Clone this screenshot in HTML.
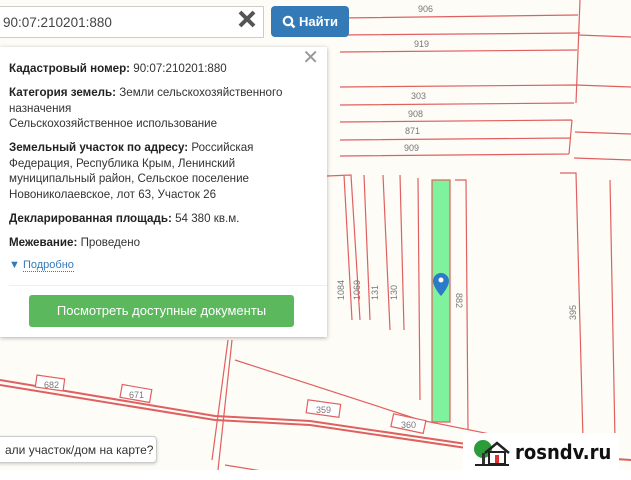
<!DOCTYPE html>
<html><head><meta charset="utf-8"><style>
*{margin:0;padding:0;box-sizing:border-box}
body{width:631px;height:480px;overflow:hidden;position:relative;background:#fdfcf7;font-family:"Liberation Sans",sans-serif}
svg.map{position:absolute;left:0;top:0}
.inp{position:absolute;left:0;top:6px;width:264px;height:32px;background:#fff;border:1px solid #ccc;border-left:none;font-size:13.5px;color:#444;padding:8px 3px}
.x{position:absolute;left:237px;top:9px}
.btn{position:absolute;left:271px;top:6px;width:78px;height:31px;background:#337ab7;border-radius:4px;color:#fff;font-size:13px;font-weight:bold;padding:8px 0 0 28px}
.btn svg{position:absolute;left:11px;top:9px}
.pop{position:absolute;left:0;top:47px;width:327px;height:290px;background:#fff;box-shadow:0 1px 4px rgba(0,0,0,.3);font-size:11.6px;color:#333;padding:14px 30px 14px 9px;line-height:15.5px}
.pop b{font-weight:bold;color:#222}
.pop p{margin-bottom:8.7px}
.cl{position:absolute;right:8px;top:4px;font-size:20px;color:#999}
.more{color:#337ab7;font-size:11px;margin-top:-1px}
.more span{border-bottom:1px dotted #337ab7}
.gbtn{position:absolute;left:29px;top:248px;width:265px;height:32px;background:#5cb85c;border-radius:3px;color:#fff;font-size:13px;text-align:center;line-height:32px}
.hr{position:absolute;left:9px;right:0;top:238px;border-top:1px solid #eee}
.q{position:absolute;left:-4px;top:436px;width:161px;height:27px;background:#fff;border:1px solid #ccc;border-radius:4px;font-size:12px;color:#333;padding:6px 8px;white-space:nowrap;box-shadow:0 1px 3px rgba(0,0,0,.2)}
.logo{position:absolute;left:463px;top:433px;width:156px;height:38px;background:#fff}
.logo .t{position:absolute;left:52px;top:7px;font-size:20px;font-weight:bold;color:#111;font-family:"DejaVu Sans Condensed","DejaVu Sans",sans-serif}
.bot{position:absolute;left:0;top:470px;width:631px;height:10px;background:#fff}
</style></head><body>
<svg class="map" width="631" height="480" fill="none" stroke="#e06060" stroke-width="1.2">
<g font-size="9" fill="#777" stroke="none" font-family="Liberation Sans">
<text x="418" y="12">906</text><text x="414" y="47">919</text><text x="411" y="99">303</text><text x="408" y="117">908</text><text x="405" y="134">871</text><text x="404" y="151">909</text>
</g>
<path d="M340 18L578 15M340 35L580 33M340 52L577 50M340 87L576 85M340 105L574 103M340 122L572 120M340 140L570 138M340 156L569 154M580 0L576 103M572 120L569 154M578 35L631 37M576 85L631 87M575 132L631 134M574 158L631 160"/>
<path d="M327 176L351 175L360 320M344 175L352 320M364 175L370 320M383 175L390 330M400 175L404 330M418 178L420 400M455 180L466 180L468 430M560 173L576 173L583 440M610 180L615 440"/>
<rect x="432" y="180" width="18" height="242" fill="#7ef29c" stroke="#e06060"/>
<g font-size="9" fill="#777" stroke="none"><text transform="translate(344 300) rotate(-90)">1084</text><text transform="translate(360 300) rotate(-90)">1069</text><text transform="translate(378 300) rotate(-90)">131</text><text transform="translate(397 300) rotate(-90)">130</text><text transform="translate(456 293) rotate(90)">882</text><text transform="translate(576 320) rotate(-90)">395</text></g>
<path d="M0 385L215 420L310 425L480 450L631 460M0 380L215 416L310 421L480 446" stroke-width="2"/>
<path d="M228 340L212 460M232 340L218 470M235 360L420 420L520 440M225 465L380 490" />
<g fill="#fff"><rect x="36" y="377" width="28" height="12" transform="rotate(8 50 383)"/><rect x="121" y="387" width="30" height="13" transform="rotate(10 136 393)"/><rect x="307" y="402" width="33" height="13" transform="rotate(8 323 408)"/><rect x="392" y="417" width="33" height="13" transform="rotate(12 408 423)"/></g>
<g font-size="9" fill="#777" stroke="none"><text x="44" y="388">682</text><text x="129" y="398">671</text><text x="316" y="413">359</text><text x="401" y="428">360</text></g>
<path d="M433 281a8 8 0 1 1 16 0c0 6-8 15-8 15s-8-9-8-15z" fill="#2b7bc6" stroke="none"/><circle cx="441" cy="280" r="2.5" fill="#fff" stroke="none"/>
</svg>
<div class="inp">90:07:210201:880</div>
<svg class="x" width="20" height="20"><path d="M3 3L17 17M17 3L3 17" stroke="#555" stroke-width="4"/></svg>
<div class="btn"><svg width="14" height="14"><circle cx="6" cy="6" r="4.2" stroke="#fff" stroke-width="2.2" fill="none"/><path d="M9 9L12.5 12.5" stroke="#fff" stroke-width="2.6"/></svg>Найти</div>
<div class="pop"><div class="cl">✕</div>
<p><b>Кадастровый номер:</b> 90:07:210201:880</p>
<p><b>Категория земель:</b> Земли сельскохозяйственного назначения<br>Сельскохозяйственное использование</p>
<p><b>Земельный участок по адресу:</b> Российская Федерация, Республика Крым, Ленинский муниципальный район, Сельское поселение Новониколаевское, лот 63, Участок 26</p>
<p><b>Декларированная площадь:</b> 54 380 кв.м.</p>
<p><b>Межевание:</b> Проведено</p>
<p class="more">▼ <span>Подробно</span></p>
<div class="hr"></div>
<div class="gbtn">Посмотреть доступные документы</div></div>
<div class="q">али участок/дом на карте?</div>
<div class="logo"><svg width="48" height="38"><circle cx="20" cy="16" r="9" fill="#2a9d3a"/><rect x="19" y="20" width="3" height="12" fill="#333"/><path d="M22 20L34 10L46 20" stroke="#222" stroke-width="2.5" fill="none"/><rect x="26" y="19" width="16" height="12" fill="#fff" stroke="#222" stroke-width="2"/><rect x="32" y="22" width="4" height="8" fill="#d33"/><path d="M12 32H46" stroke="#222" stroke-width="2"/></svg><div class="t">rosndv.ru</div></div>
<div class="bot"></div>
</body></html>
